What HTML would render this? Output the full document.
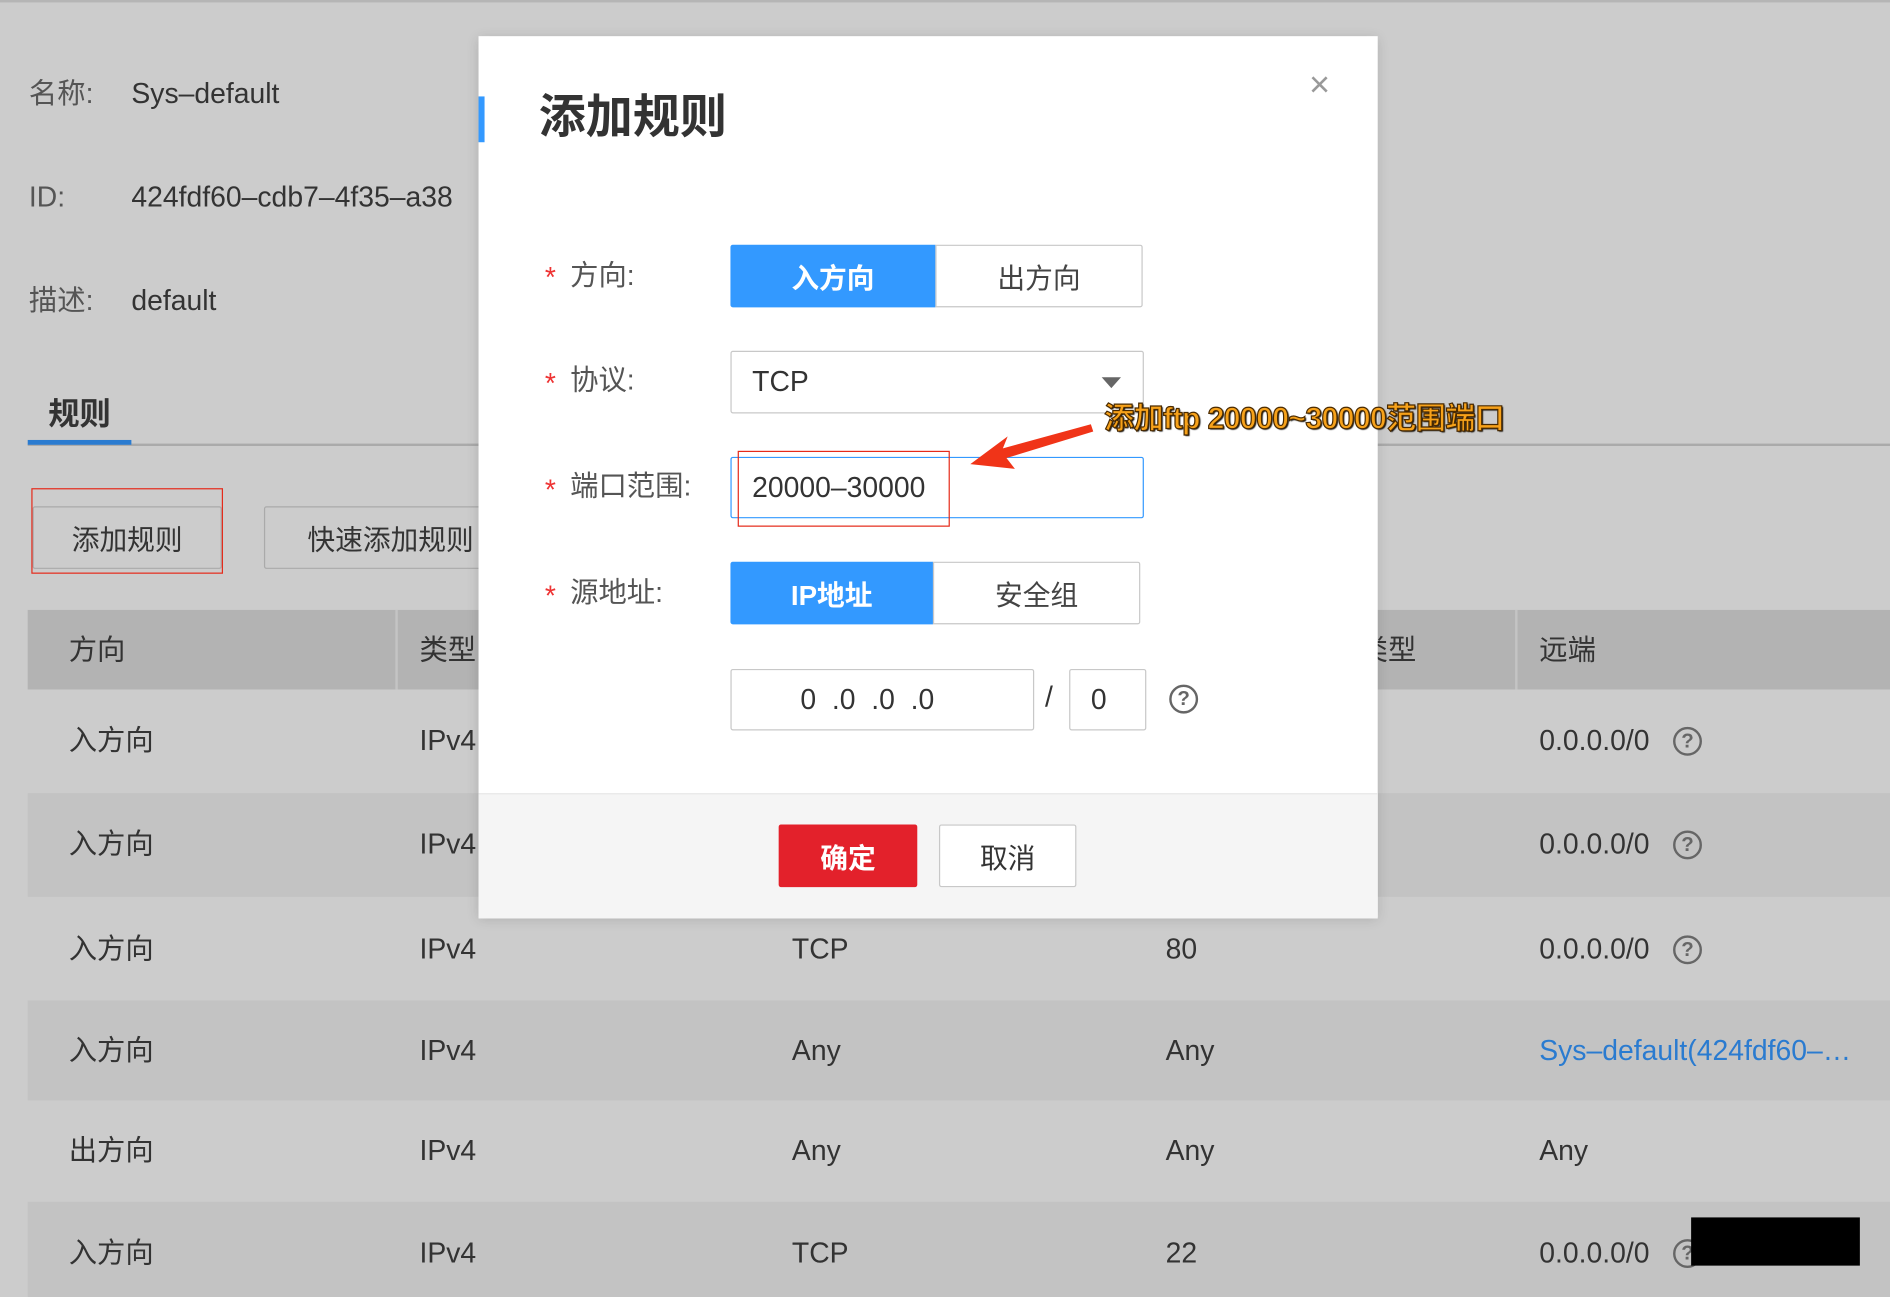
<!DOCTYPE html>
<html><head><meta charset="utf-8"><style>
html,body{margin:0;padding:0;width:1890px;height:1296px;overflow:hidden;background:#cccccc}
#s{position:absolute;left:0;top:0;width:1568px;height:1076px;transform:scale(1.20536);transform-origin:0 0;font-family:"Liberation Sans","Noto Sans CJK SC",sans-serif;color:#333;background:#cccccc}
.a{position:absolute;white-space:nowrap}
.t{font-size:23.5px;line-height:1;transform:translateY(-50%)}
.g{color:#555}
.row{position:absolute;left:23px;width:1545px}
.box{position:absolute;box-sizing:border-box;border:1px solid #c8c8c8;border-radius:2px;background:#fff}
.c{display:flex;align-items:center;justify-content:center;font-size:23px}
.q{position:absolute;width:24px;height:24px;border:2.5px solid #666;border-radius:50%;box-sizing:border-box;font-size:17px;font-weight:bold;color:#666;text-align:center;line-height:20px}
</style></head><body><div id="s">
<div class="a" style="left:0;top:0;width:1568px;height:2px;background:#b5b5b5"></div>
<div class="a t g" style="left:24px;top:78px">名称:</div><div class="a t" style="left:109px;top:78px">Sys–default</div>
<div class="a t g" style="left:24px;top:164px">ID:</div><div class="a t" style="left:109px;top:164px">424fdf60–cdb7–4f35–a38</div>
<div class="a t g" style="left:24px;top:250px">描述:</div><div class="a t" style="left:109px;top:250px">default</div>
<div class="a t" style="left:40px;top:343px;font-weight:bold;font-size:26px">规则</div>
<div class="a" style="left:23px;top:368px;width:1545px;height:2px;background:#aaa"></div>
<div class="a" style="left:23px;top:365px;width:86px;height:4px;background:#2a7bd0"></div>
<div class="box c" style="left:27px;top:420px;width:157px;height:52px;background:#cccccc;border-color:#aaa">添加规则</div>
<div class="box c" style="left:219px;top:420px;width:200px;height:52px;background:#cccccc;border-color:#aaa;justify-content:flex-start;padding-left:35px">快速添加规则</div>
<div class="a" style="left:26px;top:405px;width:159px;height:71px;border:1.5px solid #e52a1a;box-sizing:border-box"></div>
<div class="row" style="top:506px;height:66px;background:#b3b3b3"></div>
<div class="a" style="left:328px;top:506px;width:2px;height:66px;background:#c4c4c4"></div>
<div class="a" style="left:1257px;top:506px;width:2px;height:66px;background:#c4c4c4"></div>
<div class="a t" style="left:57px;top:540px">方向</div><div class="a t" style="left:348px;top:540px">类型</div><div class="a t" style="left:1128px;top:540px">类型</div><div class="a t" style="left:1277px;top:540px">远端</div>
<div class="row" style="top:658px;height:86px;background:#c3c3c3"></div>
<div class="row" style="top:830px;height:83px;background:#c3c3c3"></div>
<div class="row" style="top:997px;height:79px;background:#c3c3c3"></div>

<div class="a t" style="left:57px;top:615px">入方向</div><div class="a t" style="left:348px;top:615px">IPv4</div><div class="a t" style="left:1277px;top:615px">0.0.0.0/0</div><div class="q" style="left:1388px;top:603px">?</div>
<div class="a t" style="left:57px;top:701px">入方向</div><div class="a t" style="left:348px;top:701px">IPv4</div><div class="a t" style="left:1277px;top:701px">0.0.0.0/0</div><div class="q" style="left:1388px;top:689px">?</div>
<div class="a t" style="left:57px;top:788px">入方向</div><div class="a t" style="left:348px;top:788px">IPv4</div><div class="a t" style="left:657px;top:788px">TCP</div><div class="a t" style="left:967px;top:788px">80</div><div class="a t" style="left:1277px;top:788px">0.0.0.0/0</div><div class="q" style="left:1388px;top:776px">?</div>
<div class="a t" style="left:57px;top:872px">入方向</div><div class="a t" style="left:348px;top:872px">IPv4</div><div class="a t" style="left:657px;top:872px">Any</div><div class="a t" style="left:967px;top:872px">Any</div><div class="a t" style="left:1277px;top:872px;color:#2a7bd0">Sys–default(424fdf60–…</div>
<div class="a t" style="left:57px;top:955px">出方向</div><div class="a t" style="left:348px;top:955px">IPv4</div><div class="a t" style="left:657px;top:955px">Any</div><div class="a t" style="left:967px;top:955px">Any</div><div class="a t" style="left:1277px;top:955px">Any</div>
<div class="a t" style="left:57px;top:1040px">入方向</div><div class="a t" style="left:348px;top:1040px">IPv4</div><div class="a t" style="left:657px;top:1040px">TCP</div><div class="a t" style="left:967px;top:1040px">22</div><div class="a t" style="left:1277px;top:1040px">0.0.0.0/0</div><div class="q" style="left:1388px;top:1028px">?</div>
<div class="a" style="left:1403px;top:1010px;width:140px;height:40px;background:#000"></div>

<!-- modal -->
<div class="a" style="left:397px;top:30px;width:746px;height:731px;background:#fff;box-shadow:0 2px 10px rgba(0,0,0,.15)"></div>
<div class="a" style="left:397px;top:658px;width:746px;height:103px;background:#f5f5f5;border-top:1px solid #e8e8e8"></div>
<div class="a" style="left:397px;top:80px;width:5px;height:38px;background:#3399ff"></div>
<div class="a t" style="left:447px;top:98px;font-size:39px;font-weight:bold;color:#333">添加规则</div>
<div class="a t" style="left:1086px;top:71px;font-size:30px;color:#999">×</div>

<div class="a t" style="left:452px;top:231px;color:#e33">*</div><div class="a t g" style="left:473px;top:229px">方向:</div>
<div class="box c" style="left:606px;top:203px;width:170px;height:52px;background:#3399ff;border-color:#3399ff;color:#fff;font-weight:bold;border-radius:2px 0 0 2px">入方向</div>
<div class="box c" style="left:776px;top:203px;width:172px;height:52px;border-radius:0 2px 2px 0;color:#444">出方向</div>

<div class="a t" style="left:452px;top:319px;color:#e33">*</div><div class="a t g" style="left:473px;top:316px">协议:</div>
<div class="box" style="left:606px;top:291px;width:343px;height:52px"></div>
<div class="a t" style="left:624px;top:317px">TCP</div>
<div class="a" style="left:914px;top:313px;width:0;height:0;border-left:8px solid transparent;border-right:8px solid transparent;border-top:9px solid #666"></div>

<div class="a t" style="left:452px;top:407px;color:#e33">*</div><div class="a t g" style="left:473px;top:404px">端口范围:</div>
<div class="box" style="left:606px;top:379px;width:343px;height:51px;border-color:#3399ff"></div>
<div class="a t" style="left:624px;top:405px">20000–30000</div>
<div class="a" style="left:612px;top:374px;width:176px;height:63px;border:1.5px solid #e52a1a;box-sizing:border-box"></div>

<div class="a t" style="left:452px;top:495px;color:#e33">*</div><div class="a t g" style="left:473px;top:492px">源地址:</div>
<div class="box c" style="left:606px;top:466px;width:168px;height:52px;background:#3399ff;border-color:#3399ff;color:#fff;font-weight:bold;border-radius:2px 0 0 2px">IP地址</div>
<div class="box c" style="left:774px;top:466px;width:172px;height:52px;border-radius:0 2px 2px 0;color:#444">安全组</div>

<div class="box" style="left:606px;top:555px;width:252px;height:51px"></div>
<div class="a t" style="left:664px;top:581px">0 &nbsp;.0 &nbsp;.0 &nbsp;.0</div>
<div class="a t" style="left:867px;top:579px">/</div>
<div class="box" style="left:887px;top:555px;width:64px;height:51px"></div>
<div class="a t" style="left:905px;top:581px">0</div>
<div class="q" style="left:970px;top:568px">?</div>

<div class="box c" style="left:646px;top:684px;width:115px;height:52px;background:#e3212b;border-color:#e3212b;color:#fff;font-weight:bold">确定</div>
<div class="box c" style="left:779px;top:684px;width:114px;height:52px;color:#333">取消</div>

<svg class="a" style="left:0;top:0" width="1568" height="1076"><path d="M905 352 L832 372 L836 362 L805 385 L842 389 L835 380 L907 358Z" fill="#f03418"/></svg>
<div class="a t" style="left:916px;top:348px;font-size:25px;font-weight:bold;color:#f7a21a;-webkit-text-stroke:1px #4a2a00;letter-spacing:-0.5px;text-shadow:1px 1px 1px #000">添加ftp 20000~30000范围端口</div>
</div></body></html>
